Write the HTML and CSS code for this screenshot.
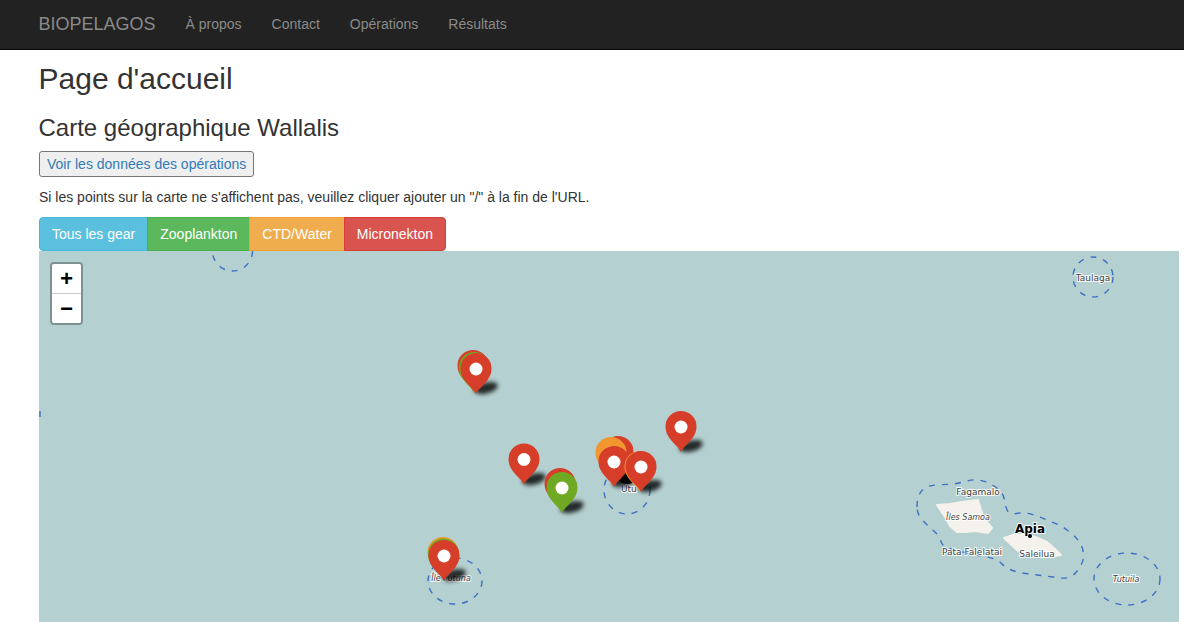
FILE: index.html
```html
<!DOCTYPE html>
<html>
<head>
    <title>Biopelagos</title>
    <link rel="stylesheet" href="styles.css">
</head>
<body>
    <nav class="navbar">
        <a class="navbar-brand" href="#">BIOPELAGOS</a>
        <a href="#">À propos</a>
        <a href="#">Contact</a>
        <a href="#">Opérations</a>
        <a href="#">Résultats</a>
    </nav>

    <main class="content">
        <h1>Page d'accueil</h1>
        <h2>Carte géographique Wallalis</h2>
        <button class="data-btn"><a href="#">Voir les données des opérations</a></button>
        <p>Si les points sur la carte ne s'affichent pas, veuillez cliquer ajouter un "/" à la fin de l'URL.</p>

        <div class="btn-group">
            <button class="btn btn-info">Tous les gear</button>
            <button class="btn btn-success">Zooplankton</button>
            <button class="btn btn-warning">CTD/Water</button>
            <button class="btn btn-danger">Micronekton</button>
        </div>

        <div class="map">
            <svg class="map-canvas" viewBox="39 251 1140 371" width="1140" height="371">
                <defs>
                    <filter id="blur" x="-50%" y="-50%" width="200%" height="200%">
                        <feGaussianBlur stdDeviation="2"/>
                    </filter>
                    <filter id="soft" x="-10%" y="-10%" width="120%" height="120%">
                        <feGaussianBlur stdDeviation="0.7"/>
                    </filter>
                    <g id="pin">
                        <path d="M0 0C-3-7-15.500-13-15.500-25.500A15.500 15.500 0 1 1 15.500-25.500C15.500-13 3-7 0 0Z"/>
                        <circle cx="0" cy="-25" r="6.500" fill="#fff"/>
                    </g>
                    <ellipse id="pin-shadow" cx="10" cy="-6" rx="12" ry="5.500" transform="rotate(-14 10 -6)" filter="url(#blur)"/>
                </defs>

                <!-- land -->
                <path class="land" d="M937 505L950 504L962 502L978 500L981 510L985 520L992 528L988 533L975 531L966 532L957 532L950 526L947 520Z"/>
                <path class="land" d="M1004 538L1013 535L1030 535L1040 539L1047 542L1055 549L1061 555L1047 557L1027 556L1017 550Z"/>

                <!-- boundaries -->
                <path class="boundary" d="M917 507C917 497 920 491 925 488C930 484 945 485 953 484C962 483 970 479 978 480C988 481 998 487 1003 495C1006 502 1005 511 1010 513C1015 515 1020 512 1025 513C1033 514 1040 517 1047 520C1054 523 1061 525 1067 530C1074 535 1080 541 1082 547C1084 553 1084 558 1082 563C1079 569 1075 575 1070 577C1065 579 1059 578 1053 577C1045 576 1038 575 1030 574C1022 573 1014 572 1007 568C1003 566 1001 562 997 560C988 556 977 556 967 553C959 551 950 550 943 545C940 542 941 538 938 535C932 529 925 524 920 517C918 514 917 510 917 507Z"/>
                <ellipse class="boundary" cx="1127" cy="579" rx="33" ry="26"/>
                <circle class="boundary" cx="1093" cy="277" r="20"/>
                <circle class="boundary" cx="232.500" cy="251" r="20"/>
                <ellipse class="boundary" cx="627" cy="490" rx="23" ry="24"/>
                <ellipse class="boundary" cx="455" cy="581" rx="27" ry="23"/>
                <path class="boundary" d="M40 411V417"/>

                <!-- labels -->
                <text class="label" x="1093" y="281">Taulaga</text>
                <text class="label" x="978" y="495">Fagamalo</text>
                <text class="label label-island" x="968" y="520">Îles Samoa</text>
                <text class="label" x="972" y="555">Pata Falelatai</text>
                <text class="label" x="1037" y="557">Saleilua</text>
                <text class="label label-capital" x="1030" y="533">Apia</text>
                <circle cx="1030" cy="536" r="2"/>
                <text class="label label-island" x="1126" y="582">Tutuila</text>
                <text class="label label-island" x="451" y="581">Île Futuna</text>
                <text class="label label-left" x="621" y="492">Utu</text>

                <!-- shadows -->
                <use class="shadow" href="#pin-shadow" x="476" y="394"/>
                <use class="shadow" href="#pin-shadow" x="524" y="485"/>
                <use class="shadow" href="#pin-shadow" x="562" y="513"/>
                <use class="shadow" href="#pin-shadow" x="614" y="487"/>
                <use class="shadow" href="#pin-shadow" x="640" y="492"/>
                <use class="shadow" href="#pin-shadow" x="681" y="452"/>
                <use class="shadow" href="#pin-shadow" x="444" y="581"/>
                <ellipse cx="627" cy="478" rx="9" ry="6" filter="url(#soft)"/>

                <!-- markers -->
                <use class="pin-red" href="#pin" x="473" y="391"/>
                <use class="pin-green" href="#pin" x="474.500" y="393"/>
                <use class="pin-red" href="#pin" x="476" y="394"/>

                <use class="pin-red" href="#pin" x="524" y="484.500"/>

                <use class="pin-red" href="#pin" x="560" y="509"/>
                <use class="pin-green" href="#pin" x="562" y="513"/>

                <use class="pin-red" href="#pin" x="618" y="477"/>
                <use class="pin-orange" href="#pin" x="611" y="478"/>
                <use class="pin-red" href="#pin" x="614" y="487"/>
                <use class="pin-orange" href="#pin" x="640" y="492"/>
                <use class="pin-red" href="#pin" x="641" y="492"/>

                <use class="pin-red" href="#pin" x="681" y="452"/>

                <use class="pin-orange" href="#pin" x="443" y="578"/>
                <use class="pin-green" href="#pin" x="443.500" y="579.500"/>
                <use class="pin-red" href="#pin" x="444" y="581"/>
            </svg>

            <div class="zoom-control">
                <a href="#">+</a>
                <a href="#">−</a>
            </div>
        </div>
    </main>
</body>
</html>
```

FILE: styles.css
```css
html, body {
    margin: 0;
    padding: 0;
    overflow: hidden;
}

body {
    font-family: "Liberation Sans", Arial, sans-serif;
    font-size: 14px;
    line-height: 20px;
    color: #333;
    background-color: #fff;
}

a {
    text-decoration: none;
}

.navbar {
    display: flex;
    align-items: center;
    gap: 30px;
    height: 47px;
    padding: 0 0 2px 38.5px;
    background-color: #222;
    border-bottom: 1px solid #080808;
}

.navbar a {
    color: #8a8a8a;
}

.navbar .navbar-brand {
    font-size: 18px;
}

.content {
    padding-left: 39px;
}

h1 {
    font-size: 30px;
    font-weight: 400;
    line-height: 33px;
    margin: 12px 0 0 -0.5px;
}

h2 {
    font-size: 24px;
    font-weight: 400;
    line-height: 26px;
    margin: 20px 0 0 -0.5px;
}

.data-btn {
    display: block;
    box-sizing: border-box;
    height: 26px;
    margin: 10px 0 0;
    padding: 0 7px;
    font: inherit;
    background-color: #efefef;
    border: 1px solid #767676;
    border-radius: 3px;
}

.data-btn a {
    color: #337ab7;
}

p {
    margin: 10px 0;
}

.btn-group {
    display: flex;
}

.btn {
    box-sizing: border-box;
    height: 34px;
    padding: 6px 12px;
    font: inherit;
    color: #fff;
    border: 1px solid transparent;
}

.btn + .btn {
    margin-left: -1px;
}

.btn:first-child {
    border-radius: 4px 0 0 4px;
}

.btn:last-child {
    border-radius: 0 4px 4px 0;
}

.btn-info {
    background-color: #5bc0de;
    border-color: #46b8da;
}

.btn-success {
    background-color: #5cb85c;
    border-color: #4cae4c;
}

.btn-warning {
    background-color: #f0ad4e;
    border-color: #eea236;
}

.btn-danger {
    background-color: #d9534f;
    border-color: #d43f3a;
}

.map {
    position: relative;
    width: 1140px;
    height: 371px;
    background-color: #b5d0d0;
    overflow: hidden;
}

.map-canvas {
    display: block;
}

.land {
    fill: #f5f1ec;
    stroke: #f5f1ec;
    stroke-width: 2;
    stroke-linejoin: round;
    filter: url(#soft);
}

.boundary {
    fill: none;
    stroke: #3f70c4;
    stroke-width: 1.4;
    stroke-dasharray: 6 7;
}

.label {
    font-family: "DejaVu Sans", sans-serif;
    font-size: 9px;
    text-anchor: middle;
    fill: #444;
    stroke: #fff;
    stroke-width: 2px;
    stroke-opacity: 0.85;
    paint-order: stroke;
}

.label-island {
    font-style: italic;
    font-size: 8px;
}

.label-capital {
    font-size: 12px;
    font-weight: 700;
    fill: #000;
}

.label-left {
    text-anchor: start;
}

.shadow {
    opacity: 0.8;
}

.pin-red {
    fill: #d63e2a;
}

.pin-green {
    fill: #6fa923;
}

.pin-orange {
    fill: #f29630;
}

.zoom-control {
    position: absolute;
    top: 11px;
    left: 11px;
    border: 2px solid rgba(0, 0, 0, 0.3);
    border-radius: 4px;
}

.zoom-control a {
    display: block;
    width: 29px;
    height: 29px;
    font-family: "Liberation Mono", monospace;
    font-size: 22px;
    font-weight: 700;
    line-height: 33px;
    text-align: center;
    color: #000;
    background-color: #fff;
}

.zoom-control a:first-child {
    border-bottom: 1px solid #ccc;
    border-radius: 2px 2px 0 0;
}

.zoom-control a:last-child {
    border-radius: 0 0 2px 2px;
}
```
